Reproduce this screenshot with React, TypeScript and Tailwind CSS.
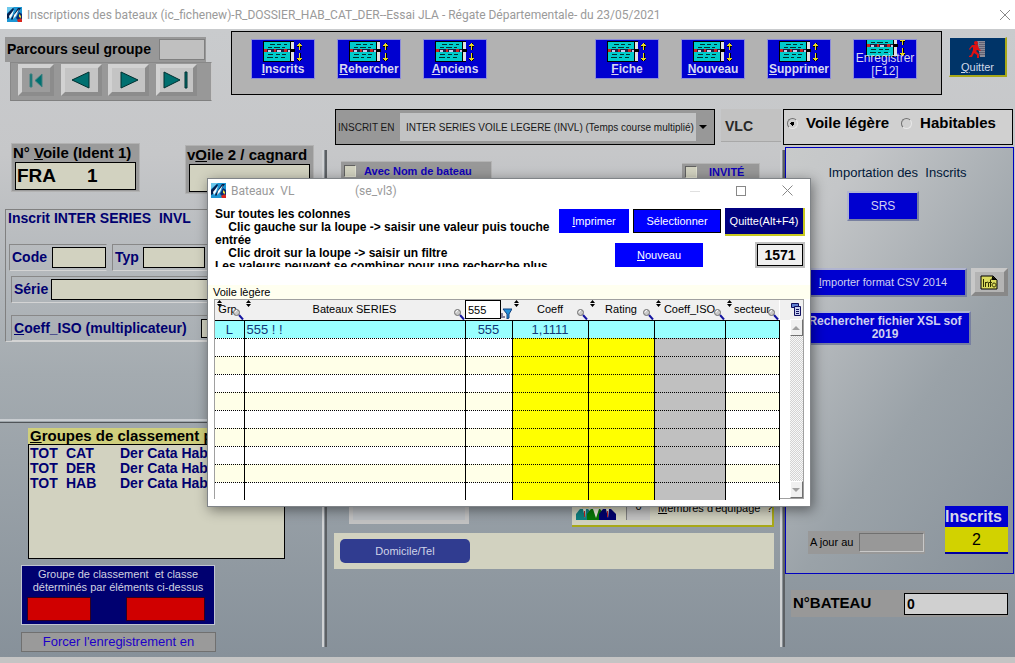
import type { ReactNode } from "react";

type Column = {
	label: string;
	width: string;
	cell: string;
	filter?: boolean;
};

const columns: Column[] = [
	{ label: "Grp", width: "w-[29px]", cell: "" },
	{ label: "Bateaux SERIES", width: "w-[221px]", cell: "" },
	{ label: "Numéro", width: "w-[47px]", cell: "", filter: true },
	{ label: "Coeff", width: "w-[76px]", cell: "bg-[#ffff00]" },
	{ label: "Rating", width: "w-[66px]", cell: "bg-[#ffff00]" },
	{ label: "Coeff_ISO", width: "w-[71px]", cell: "bg-[#c0c0c0]" },
	{ label: "secteur", width: "w-[54px]", cell: "" },
];

const rows: string[][] = [
	["L", "555 ! !", "555", "1,1111", "", "", ""],
	...Array.from({ length: 9 }, () => ["", "", "", "", "", "", ""]),
];

const groups = [
	["TOT", "CAT", "Der Cata Hab"],
	["TOT", "DER", "Der Cata Hab"],
	["TOT", "HAB", "Der Cata Hab"],
];

function AppIcon() {
	return (
		<svg width="15" height="15" viewBox="0 0 15 15" aria-hidden="true">
			<rect width="15" height="15" fill="#1c96d4" />
			<path d="M0 0h7L0 6z" fill="#6cc8ec" />
			<path d="M0 7L6 1l1 1-5 9-2 1z" fill="#06204e" />
			<path d="M2 9L7 3 5 9l-2 3z" fill="#f4fbff" />
			<path d="M4 12L11 1h3L8 9l-3 4z" fill="#071c46" />
			<path d="M7 8L12 2 9 9l-3 3z" fill="#f4fbff" />
			<path d="M9 11l3-6 3 2v5l-4 1z" fill="#0d2c70" />
			<path d="M12 7l2 2v2l-2-1z" fill="#e8e03c" />
			<path d="M10 13l4-2 1 2v2h-4z" fill="#d8241c" />
			<path d="M0 13h5l4 2H0z" fill="#1c96d4" />
		</svg>
	);
}

function ListIcon() {
	return (
		<svg width="40" height="21" viewBox="0 0 40 21" aria-hidden="true" shapeRendering="crispEdges">
			<rect x="0" y="0" width="31" height="21" fill="#000" />
			<rect x="1" y="1" width="26" height="19" fill="#00cccc" />
			<path
				d="M7 3.500h5m2 0h4m3 0h3M5 6.500h4m2 0h6m2 0h3M5 13.500h5m3 0h4m2 0h4M4 16.500h6m2 0h3m3 0h4"
				stroke="#003030"
			/>
			<rect x="1" y="8" width="26" height="3" fill="#202040" />
			<path d="M1 9.500h3m7 0h2m8 0h3" stroke="#d02020" strokeWidth="3" />
			<path d="M5 9.500h3m6 0h4m7 0h2" stroke="#c8c8e8" strokeWidth="2" />
			<rect x="28" y="1" width="3" height="19" fill="#e0e0e0" />
			<rect x="28" y="8" width="4" height="3" fill="#000" />
			<path
				d="M36.500 2v7M34 4.500h5M35 3.500h3M36.500 12v8M34 17.500h5M35 18.500h3"
				stroke="#000"
				strokeWidth="2"
			/>
			<path d="M36.500 2v7M34 4.500h5M35 3.500h3M36.500 12v8M34 17.500h5M35 18.500h3" stroke="#e8d820" />
		</svg>
	);
}

function ExitIcon() {
	return (
		<svg width="17" height="17" viewBox="0 0 17 17" className="shrink-0" aria-hidden="true">
			<path d="M8 0h8v16h-5z" fill="#8c8c98" />
			<path d="M11 1v14M13 1v14M15 1v14" stroke="#383850" strokeDasharray="1 1" />
			<circle cx="7" cy="2" r="2" fill="#e01010" />
			<path d="M3 4l6 0 1 4 2 1-1 1-3-1-1 1 3 3v4H8v-3l-3-2-2 4H0v-1l2-1 2-5V6L2 7 1 9 0 8z" fill="#e01010" />
		</svg>
	);
}

function Loupe() {
	return (
		<svg
			width="11"
			height="11"
			viewBox="0 0 11 11"
			aria-hidden="true"
			className="absolute right-0 bottom-0"
		>
			<path d="M6 6l4 4.500" stroke="#1414a0" strokeWidth="2" />
			<circle cx="3.500" cy="3.500" r="3" fill="#c8c8c8" stroke="#707070" />
			<path d="M2 3.500a2 2 0 0 1 2-2" stroke="#fff" fill="none" />
		</svg>
	);
}

function SortMark() {
	return (
		<svg
			width="5"
			height="7"
			viewBox="0 0 5 7"
			aria-hidden="true"
			className="absolute top-0 left-0.5"
		>
			<path d="M2.500 0L5 3H0zM2.500 7L5 4H0z" fill="#000" />
		</svg>
	);
}

function CrewIcon() {
	return (
		<svg width="40" height="24" viewBox="0 0 40 24" className="shrink-0" aria-hidden="true">
			<path d="M6 7h7v5H6zM17 6h7v6h-7zM28 7h7v5h-7z" fill="#d8c890" />
			<path d="M5 6h8v3H5z" fill="#806020" />
			<path d="M28 5h8v3h-8z" fill="#202020" />
			<path d="M0 24v-6l4-5h8l4 5v6z" fill="#108080" />
			<path d="M11 24v-6l4-5h9l4 5v6z" fill="#087808" />
			<path d="M23 24v-6l4-5h8l5 5v6z" fill="#000070" />
			<path d="M7 13l2 9 1-9zM17 13l3 9 3-9zM30 13l2 9 1-9z" fill="#f0f0e0" />
			<path d="M8.500 15v6M31.500 15v6" stroke="#c02020" />
		</svg>
	);
}

function ToolButton({ children }: { children: ReactNode }) {
	return (
		<button
			type="button"
			className="flex h-10 w-16 shrink-0 flex-col items-center border border-[#8c8cd8] bg-[#0000d0] pt-px text-[12px] leading-[14px] font-bold text-[#d8d8f0]"
		>
			<ListIcon />
			{children}
		</button>
	);
}

function NavButton({ label, d, dim }: { label: string; d: string; dim?: boolean }) {
	return (
		<button
			type="button"
			aria-label={label}
			className={`flex h-8 items-center justify-center border-4 border-t-[#d2d2d2] border-r-[#8c8c8c] border-b-[#8c8c8c] border-l-[#d2d2d2] ${dim ? "w-9 bg-[#9c9c9c]" : "w-[41px] bg-[#c4c4c4]"}`}
		>
			<svg width="26" height="20" viewBox="0 0 26 20" className="shrink-0" aria-hidden="true">
				<path d={d} fill="#007070" stroke={dim ? "#408080" : "#003030"} strokeWidth="1" />
			</svg>
		</button>
	);
}

function Divider() {
	return (
		<div className="mt-[5px] mb-[10px] w-[5px] shrink-0 border-x-2 border-l-[#d0d2d4] border-r-[#5c6064] bg-[#888e94]" />
	);
}

function BoatDialog() {
	return (
		<section
			role="dialog"
			aria-label="Bateaux VL"
			className="absolute top-[178px] left-[207px] z-10 w-[604px] border border-[#808488] bg-white pb-[7px] text-[11px] text-black shadow-[2px_3px_12px_rgba(0,0,0,0.45)]"
		>
			<div className="flex h-[23px] items-center pl-[3px] font-[Roboto,sans-serif] text-[12px] text-[#9a9a9a]">
				<AppIcon />
				<span className="ml-[5px] w-[124px] whitespace-pre">Bateaux  VL</span>
				<span className="flex-1">(se_vl3)</span>
				<div className="flex">
					<button type="button" aria-label="Réduire" className="flex h-6 w-[46px] items-center justify-center">
						<svg width="10" height="10"><path d="M0 5.500h10" stroke="#e0e0e0" /></svg>
					</button>
					<button type="button" aria-label="Agrandir" className="flex h-6 w-[46px] items-center justify-center">
						<svg width="10" height="10"><rect x=".5" y=".5" width="9" height="9" fill="none" stroke="#888" /></svg>
					</button>
					<button type="button" aria-label="Fermer" className="flex h-6 w-[46px] items-center justify-center">
						<svg width="11" height="11"><path d="M.5.5l10 10M10.500.5l-10 10" stroke="#888" /></svg>
					</button>
				</div>
			</div>

			<div className="flex h-[83px] justify-between pr-[5px] pl-[7px]">
				<div className="mt-[6px] h-[59px] w-[338px] overflow-hidden text-[12px] leading-[13px] font-bold">
					<p>Sur toutes les colonnes</p>
					<p className="whitespace-pre-wrap">{"    Clic gauche sur la loupe -> saisir une valeur puis touche entrée"}</p>
					<p className="whitespace-pre">{"    Clic droit sur la loupe -> saisir un filtre"}</p>
					<p className="whitespace-nowrap">Les valeurs peuvent se combiner pour une recherche plus</p>
				</div>
				<div className="w-[246px] pt-[6px] text-white">
					<div className="flex gap-1">
						<button type="button" className="mt-px h-6 w-[70px] bg-[#0000ff]">
							<u>I</u>mprimer
						</button>
						<button type="button" className="mt-px h-6 w-[88px] border border-black bg-[#0000ff]">
							Sélectionner
						</button>
						<button
							type="button"
							className="h-[28px] w-[80px] border-r-2 border-b-2 border-[#c8c820] bg-[#000080] whitespace-nowrap"
						>
							Quitte(Alt+F4)
						</button>
					</div>
					<div className="mt-[6px] flex items-center justify-between pl-[56px]">
						<button type="button" className="h-6 w-[88px] bg-[#0000ff]">
							<u>N</u>ouveau
						</button>
						<div className="border-2 border-[#c0c0c0]">
							<input
								aria-label="Nombre de bateaux"
								readOnly
								defaultValue="1571"
								className="block h-[22px] w-[46px] border border-black bg-[#f0f0f0] text-center text-[14px] font-bold text-black"
							/>
						</div>
					</div>
				</div>
			</div>

			<h2 className="h-[14px] bg-[#fffff0] pl-[5px] leading-[14px]">Voile lègère</h2>

			<div className="mx-[6px] flex h-[200px] border border-[#a0a0a0] bg-white">
				<table className="w-[564px] table-fixed border-collapse">
					<thead>
						<tr className="h-[20px] bg-[#f0f0f0]">
							{columns.map((c) => (
								<th key={c.label} className={`${c.width} relative border-b border-black p-0 font-normal`}>
									{c.filter ? (
										<div className="flex h-[19px] items-end">
											<input
												aria-label={c.label}
												defaultValue="555"
												className="h-[19px] w-9 border border-black bg-white pl-0.5"
											/>
											<svg width="11" height="11" viewBox="0 0 11 11" aria-hidden="true">
												<path d="M2 1h9L8 6v4l-2 1V6z" fill="#2090d8" stroke="#104080" />
												<path d="M1 5v3M0 9h4" stroke="#101040" />
											</svg>
										</div>
									) : (
										<>
											<SortMark />
											<div className={c.label === "Grp" ? "pr-1 leading-[19px]" : "leading-[19px]"}>{c.label}</div>
											<Loupe />
										</>
									)}
								</th>
							))}
						</tr>
					</thead>
					<tbody>
						{rows.map((row, r) => (
							<tr
								key={r}
								className={`h-[18px] ${r === 0 ? "bg-[#99ffff] text-[#103878]" : r % 2 === 0 ? "bg-[#ffffe8]" : "bg-white"}`}
							>
								{row.map((value, c) => (
									<td
										key={columns[c].label}
										className={`border-r border-b border-r-black border-b-black p-0 text-[13px] leading-[17px] ${r === 9 ? "[border-bottom-style:none]" : "[border-bottom-style:dotted]"} ${r === 0 ? "" : columns[c].cell} ${c === 1 ? "pl-0.5 text-left" : "text-center"}`}
									>
										{value}
									</td>
								))}
							</tr>
						))}
					</tbody>
				</table>
				<div className="h-[20px] w-[10px] bg-[#f0f0f0]" />
				<div className="flex flex-1 flex-col bg-[#f0f0f0]">
					<button type="button" aria-label="Colonnes" className="flex h-[19px] items-center justify-center">
						<svg width="11" height="13" viewBox="0 0 11 13" aria-hidden="true">
							<path d="M.5.500h7v4h-7z" fill="#6080d0" stroke="#101060" />
							<path d="M3.500 3.500h6v9h-6z" fill="#c8d0f0" stroke="#101060" />
							<path d="M5 6.500h3M5 8.500h3M5 10.500h3" stroke="#101060" />
						</svg>
					</button>
					<button
						type="button"
						aria-label="Monter"
						className="flex h-[17px] items-center justify-center border border-t-white border-r-[#707070] border-b-[#707070] border-l-white bg-[#f0f0f0]"
					>
						<svg width="8" height="4"><path d="M4 0l4 4H0z" fill="#a0a0a0" /></svg>
					</button>
					<div className="flex-1 bg-[repeating-conic-gradient(#d4d4d4_0_25%,#f8f8f8_0_50%)] bg-[length:2px_2px]" />
					<button
						type="button"
						aria-label="Descendre"
						className="flex h-[17px] items-center justify-center border border-t-white border-r-[#707070] border-b-[#707070] border-l-white bg-[#f0f0f0]"
					>
						<svg width="8" height="4"><path d="M0 0h8L4 4z" fill="#a0a0a0" /></svg>
					</button>
				</div>
			</div>
		</section>
	);
}

function LeftColumn() {
	return (
		<aside className="w-[322px] shrink-0 pt-[42px] text-[14px] font-bold">
			<div className="flex items-start gap-[45px] pl-[11px]">
				<div className="h-[49px] w-[129px] border border-[#b2b2b2] bg-[#9a9a9a] px-px text-[15px]">
					<label htmlFor="voile1" className="block leading-[18px] whitespace-nowrap">
						N° <u>V</u>oile (Ident 1)
					</label>
					<input
						id="voile1"
						defaultValue="FRA      1"
						className="mx-0.5 block h-7 w-[121px] border border-black bg-[#d2d2c0] pl-px text-[19px] whitespace-pre"
					/>
				</div>
				<div className="mt-0.5 h-[49px] w-[129px] border border-[#b2b2b2] bg-[#9a9a9a] px-px text-[15px]">
					<label htmlFor="voile2" className="block leading-[18px] whitespace-nowrap">
						v<u>O</u>ile 2 / cagnard
					</label>
					<input id="voile2" className="mx-0.5 block h-7 w-[121px] border border-black bg-[#d2d2c0]" />
				</div>
			</div>

			<fieldset className="mt-[15px] mr-2 ml-[5px] h-[133px] border border-t-[#808080] border-r-[#d4d4d4] border-b-[#d4d4d4] border-l-[#808080] text-[#000070]">
				<div className="pl-0.5 leading-[16px] whitespace-pre">Inscrit INTER SERIES  INVL</div>
				<div className="mt-[18px] ml-[3px] flex gap-[5px]">
					<div className="flex h-[27px] w-[98px] items-center justify-between border border-t-[#888] border-r-transparent border-b-[#d4d4d4] border-l-[#888] pl-0.5">
						<label htmlFor="code">Code</label>
						<input id="code" className="h-[21px] w-[54px] border border-black bg-[#d2d2c0]" />
					</div>
					<div className="flex h-[27px] flex-1 items-center border border-t-[#888] border-r-transparent border-b-[#d4d4d4] border-l-[#888] pl-0.5">
						<label htmlFor="typ" className="w-[28px]">Typ</label>
						<input id="typ" className="h-[21px] w-[62px] border border-black bg-[#d2d2c0]" />
					</div>
				</div>
				<div className="mt-[5px] ml-[5px] flex h-[27px] items-center border border-t-[#888] border-r-transparent border-b-[#d4d4d4] border-l-[#888] pl-0.5">
					<label htmlFor="serie" className="w-[37px]">Série</label>
					<input id="serie" className="h-[21px] min-w-0 flex-1 border border-black bg-[#d2d2c0]" />
				</div>
				<div className="mt-3 ml-[5px] flex h-[26px] items-center border border-t-[#888] border-r-transparent border-b-[#d4d4d4] border-l-[#888] pl-0.5">
					<label htmlFor="iso" className="w-[187px]">
						<u>C</u>oeff_ISO (multiplicateur)
					</label>
					<input id="iso" className="h-[19px] w-[70px] border border-black bg-[#d2d2c0]" />
				</div>
			</fieldset>

			<div className="mt-[77px] h-1 border-t-2 border-b border-t-[#c8ccd0] border-b-[#505458]" />

			<div className="mt-[5px] ml-7 w-[257px]">
				<h2 className="h-4 bg-[#cfcf7c] pl-0.5 text-[15px] leading-[16px] whitespace-nowrap">
					<u>G</u>roupes de classement possibles
				</h2>
				<ul className="h-[115px] border border-black bg-[#d2d2c0] pt-px pl-px text-[#000070]">
					{groups.map(([kind, code, label]) => (
						<li key={code} className="flex leading-[15px]">
							<span className="w-9">{kind}</span>
							<span className="w-[54px]">{code}</span>
							<span>{label}</span>
						</li>
					))}
				</ul>
			</div>

			<div className="mt-[6px] ml-[21px] h-[60px] w-[194px] border border-[#c0c4d0] bg-[#000070] px-[5px] pt-0.5 text-center text-[11px] leading-[13px] font-normal text-[#d0d0e0]">
				<p className="whitespace-pre">Groupe de classement  et classe</p>
				<p className="whitespace-nowrap">déterminés par éléments ci-dessus</p>
				<div className="mt-[3px] flex justify-between pr-1">
					<div className="h-6 w-16 border border-[#300020] bg-[#d00000]" />
					<div className="h-6 w-[79px] border border-[#300020] bg-[#d00000]" />
				</div>
			</div>
			<button
				type="button"
				className="mt-[7px] mb-[5px] ml-[21px] block h-5 w-[195px] border border-[#707070] bg-[#9a9a9a] text-[13px] leading-[16px] font-normal text-[#1c00c8]"
			>
				Forcer l'enregistrement en
			</button>
		</aside>
	);
}

function RightPanel() {
	return (
		<div className="mr-px w-[229px] shrink-0 text-[11px]">
			<div className="mt-0.5 flex h-[427px] flex-col border border-[#0000c0] bg-[linear-gradient(125deg,#c8caca_0%,#c4c6c8_15%,#9aa2a8_60%,#87919a_100%)]">
				<h2 className="mt-4 pr-1 text-center text-[13px] leading-[18px] whitespace-pre text-[#001838]">
					Importation des  Inscrits
				</h2>
				<button
					type="button"
					className="mt-[9px] ml-[61px] h-[30px] w-[72px] border-2 border-t-[#b0b4d0] border-r-[#7880a0] border-b-[#7880a0] border-l-[#b0b4d0] bg-[#0000d0] text-[12px] text-[#d0d0f0]"
				>
					SRS
				</button>
				<div className="mt-[47px] flex justify-end gap-1 pr-[5px]">
					<button
						type="button"
						className="h-[29px] w-[168px] border-2 border-t-[#b0b4d0] border-r-[#7880a0] border-b-[#7880a0] border-l-[#b0b4d0] bg-[#0000d0] whitespace-nowrap text-[#d0d0f0]"
					>
						<u>I</u>mporter format CSV 2014
					</button>
					<button
						type="button"
						aria-label="Info"
						className="flex h-[28px] w-[37px] items-center justify-center border-4 border-t-[#c8c8c8] border-r-[#888] border-b-[#888] border-l-[#c8c8c8] bg-[#b4b4b4]"
					>
						<svg width="19" height="15" viewBox="0 0 19 15" className="shrink-0" aria-hidden="true">
							<path d="M1 1h12l4 4v9H1z" fill="#dcdc60" stroke="#000" />
							<path d="M12 1v4h5z" fill="#000" />
							<path d="M3.500 4v8M5.500 12V7M5.500 8q3-2 3 0V12M10.500 12V5q0-1 2-1M9 7.500h3M14 8a2 2 0 1 0 .1 0" fill="none" stroke="#303000" />
						</svg>
					</button>
				</div>
				<button
					type="button"
					className="mt-[14px] ml-[13px] h-[34px] w-[172px] border-2 border-t-[#b0b4d0] border-r-[#7880a0] border-b-[#7880a0] border-l-[#b0b4d0] bg-[#0000d0] text-[12px] leading-[13px] font-bold text-[#d0d0f0]"
				>
					Rechercher fichier XSL sof 2019
				</button>
				<div className="mt-auto mb-[19px] flex items-end justify-between pr-[5px] pl-[22px]">
					<div className="flex h-[23px] w-[117px] items-center justify-between bg-[#989898] pr-px pl-0.5">
						<label htmlFor="date">A jour au</label>
						<input
							id="date"
							className="h-[19px] w-[65px] border border-t-[#707070] border-r-[#c8c8c8] border-b-[#c8c8c8] border-l-[#707070]"
						/>
					</div>
					<div className="w-[63px] border-b-2 border-[#0000a0] text-[16px]">
						<div className="bg-[#0000d0] leading-[21px] font-bold text-[#d8d8e8]">Inscrits</div>
						<div className="bg-[#d2d200] text-center leading-[25px]">2</div>
					</div>
				</div>
			</div>
			<div className="mt-4 mr-[6px] ml-[6px] flex h-[27px] items-center justify-between bg-[#989898] pl-0.5 text-[15px] font-bold">
				<label htmlFor="bateau">N°BATEAU</label>
				<input
					id="bateau"
					defaultValue="0"
					className="h-[22px] w-[104px] border border-black bg-[#d0d0d0] pl-0.5 text-[14px]"
				/>
			</div>
		</div>
	);
}

export default function App() {
	return (
		<div className="relative flex min-h-screen flex-col overflow-hidden bg-[#c0c0c0] font-['Liberation_Sans',Arial,sans-serif] text-black">
			<header className="flex h-[29px] items-center justify-between bg-white pr-[5px] pl-[7px] font-[Roboto,sans-serif] text-[12px] text-[#9a9a9a]">
				<div className="flex items-center gap-[5px]">
					<AppIcon />
					<h1 className="whitespace-nowrap">
						Inscriptions des bateaux (ic_fichenew)-R_DOSSIER_HAB_CAT_DER--Essai JLA - Régate Départementale- du 23/05/2021
					</h1>
				</div>
				<button type="button" aria-label="Fermer la fenêtre">
					<svg width="10" height="10"><path d="M0 0l10 10M10 0L0 10" stroke="#888" /></svg>
				</button>
			</header>

			<main className="flex flex-1 flex-col bg-[linear-gradient(180deg,#c9cbcd_0%,#c6c7c9_20%,#a4abb0_55%,#87919a_100%)]">
				<div className="flex h-[72px] items-start">
					<div className="w-[231px] shrink-0 pt-2">
						<div className="ml-[5px] flex h-[25px] w-[201px] items-center justify-between bg-[#989898] pr-px pl-0.5">
							<label htmlFor="groupe" className="text-[14px] font-bold whitespace-nowrap">
								Parcours seul groupe
							</label>
							<input id="groupe" className="h-[21px] w-[46px] border border-[#808080] bg-[#c0c0c0]" />
						</div>
						<nav className="ml-[10px] flex h-[39px] w-[202px] items-start justify-between border border-t-[#888] border-r-[#c8c8c8] border-b-[#808080] border-l-[#888] bg-[#989898] pt-px pr-[14px] pl-[7px]">
							<NavButton label="Premier" dim d="M7 4h2v13H7zM19 4v13l-7-6.500z" />
							<NavButton label="Précédent" d="M21 2v16L4 10z" />
							<NavButton label="Suivant" d="M5 2v16l17-8z" />
							<NavButton label="Dernier" d="M1 2v16l16-8zM22 2h2v16h-2z" />
						</nav>
					</div>
					<div className="mt-0.5 flex h-[64px] flex-1 gap-[22px] border border-black bg-[#b2b2b2] pt-[7px] pl-[19px]">
						<ToolButton><span><u>I</u>nscrits</span></ToolButton>
						<ToolButton><span><u>R</u>ehercher</span></ToolButton>
						<ToolButton><span><u>A</u>nciens</span></ToolButton>
						<div className="w-16" />
						<ToolButton><span><u>F</u>iche</span></ToolButton>
						<ToolButton><span><u>N</u>ouveau</span></ToolButton>
						<ToolButton><span><u>S</u>upprimer</span></ToolButton>
						<button
							type="button"
							className="relative flex h-10 w-16 flex-col items-center justify-end overflow-hidden border border-[#8c8cd8] bg-[#0000d0] text-[12px] leading-[13px] text-[#d8d8f0]"
						>
							<span className="absolute -top-1 left-3"><ListIcon /></span>
							<span className="relative">Enregistrer</span>
							<span className="relative">[F12]</span>
						</button>
					</div>
					<button
						type="button"
						className="mt-2 mr-2 ml-[7px] flex h-10 w-[58px] flex-col items-center border-t border-r-2 border-b-2 border-l border-t-[#c8ccd0] border-r-[#a8a818] border-b-[#a8a818] border-l-[#c8ccd0] bg-[#003468] pt-[3px] text-[11px] leading-[18px] text-[#d0d8e8]"
					>
						<ExitIcon />
						<span><u>Q</u>uitter</span>
					</button>
				</div>

				<div className="flex flex-1">
					<LeftColumn />
					<div className="flex min-w-0 flex-1 flex-col pt-2">
						<div className="flex h-9 pr-0.5 pl-[13px]">
							<div className="flex min-w-0 flex-1 items-center border border-black bg-[#989898] pl-0.5 text-[10px] text-[#181818]">
								<label htmlFor="serie-insc" className="w-[62px] shrink-0 whitespace-nowrap">INSCRIT EN</label>
								<select
									id="serie-insc"
									className="h-7 min-w-0 flex-1 appearance-none overflow-hidden bg-[#c2c3c4] pl-[6px] whitespace-nowrap"
								>
									<option>INTER SERIES VOILE LEGERE (INVL) (Temps course multiplié)</option>
								</select>
								<svg width="18" height="5" viewBox="0 0 18 5" aria-hidden="true">
									<path d="M3 0h8L7 4z" fill="#000" />
								</svg>
							</div>
							<output className="ml-[6px] h-[33px] w-[60px] border-b border-[#a8a8a8] bg-[#c2c2c2] pl-1 text-[14px] leading-[34px] font-bold text-[#282828]">
								VLC
							</output>
							<fieldset className="ml-0.5 flex w-[230px] items-start gap-3 border border-black bg-[#d0d0d0] pt-1 pl-[3px] text-[15px] leading-[18px] font-bold">
								<label className="flex items-center gap-2 whitespace-nowrap">
									<input
										type="radio"
										name="type"
										defaultChecked
										className="size-[11px] appearance-none rounded-full border border-t-[#707070] border-r-[#e8e8e8] border-b-[#e8e8e8] border-l-[#707070] checked:bg-[radial-gradient(circle,#000_0_2px,transparent_2px)]"
									/>
									Voile légère
								</label>
								<label className="flex items-center gap-2 whitespace-nowrap">
									<input
										type="radio"
										name="type"
										className="size-[11px] appearance-none rounded-full border border-t-[#707070] border-r-[#e8e8e8] border-b-[#e8e8e8] border-l-[#707070]"
									/>
									Habitables
								</label>
							</fieldset>
						</div>

						<div className="flex flex-1">
							<Divider />
							<div className="mr-[6px] ml-[7px] min-w-0 flex-1">
								<div className="mt-4 mr-[14px] ml-[7px] flex justify-between text-[11px] font-bold text-[#1000b8]">
									<label className="flex h-6 w-[151px] items-start gap-2 border-t border-r border-[#b4b4b4] bg-[#989898] pt-0.5 pl-[3px] leading-[14px] whitespace-nowrap">
										<input
											type="checkbox"
											className="mt-px size-3 appearance-none border border-t-[#606060] border-r-[#e0e0d0] border-b-[#e0e0d0] border-l-[#606060] bg-[#d2d2c0]"
										/>
										Avec Nom de bateau
									</label>
									<label className="mt-0.5 flex h-[22px] w-[78px] items-start gap-3 border-t border-r border-[#b4b4b4] bg-[#989898] pt-px pl-[3px] leading-[14px]">
										<input
											type="checkbox"
											className="mt-px size-3 appearance-none border border-t-[#606060] border-r-[#e0e0d0] border-b-[#e0e0d0] border-l-[#606060] bg-[#d2d2c0]"
										/>
										INVITÉ
									</label>
								</div>
								<div className="mt-[300px] flex h-[42px] items-start justify-between pl-[15px]">
									<input
										aria-label="Équipage"
										className="h-[39px] w-[120px] border-4 border-[#c2c2c2] bg-[#b8bcc0]"
									/>
									<button
										type="button"
										className="flex h-[42px] w-[202px] items-center border-r-2 border-b-2 border-[#a8a818] bg-[#d2d2c0] pt-[6px] pl-1 text-[11px]"
									>
										<CrewIcon />
										<span className="ml-[10px] h-6 w-6 shrink-0 border-l border-[#808080] bg-[#c4c4c4] leading-[20px]">0</span>
										<span className="ml-2 whitespace-pre"><u>M</u>embres d'équipage  ?</span>
									</button>
								</div>
								<div className="mt-[6px] flex h-9 items-center bg-[#d2d2c0] pl-[6px]">
									<button type="button" className="h-6 w-[130px] rounded-[5px] bg-[#303c90] text-[11px] text-[#d0d4e8]">
										Domicile/Tel
									</button>
								</div>
							</div>
							<Divider />
							<RightPanel />
						</div>
					</div>
				</div>
			</main>
			<footer className="h-[6px] bg-[#c4c4c4]" />
			<BoatDialog />
		</div>
	);
}
